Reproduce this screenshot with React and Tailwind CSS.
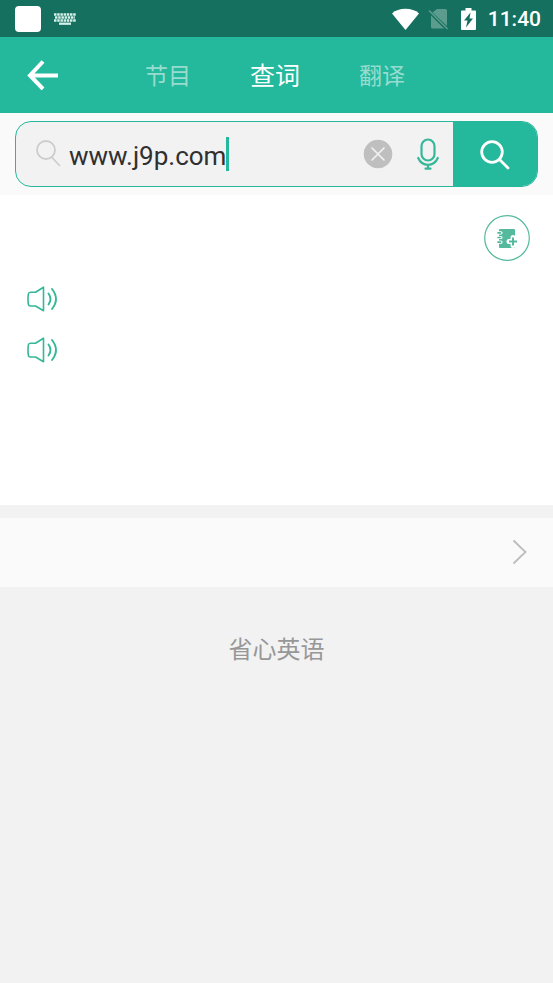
import React, { useState } from 'react';

const tabs = ['节目', '查词', '翻译'];

function StatusBar() {
  return (
    <div className="flex h-[37px] items-center justify-between bg-[#16705f] pr-3 pl-[15px] text-white">
      <div className="flex items-center gap-[13px]">
        <div className="h-[26px] w-[26px] rounded-[4px] bg-white" />
        <svg className="h-3 w-[22px]" viewBox="0 0 22 12" fill="none" stroke="#d5efe9" strokeWidth="2.300">
          <path d="M0 1.500h22M0 7.500h22" strokeDasharray="2.500 0.700" />
          <path d="M1 4.500h20" strokeDasharray="2.500 0.700" />
          <path d="M5 10.700h12" />
        </svg>
      </div>
      <div className="flex items-center">
        <svg className="h-[22px] w-[27px]" viewBox="0 0 27 22" fill="currentColor">
          <path d="M0 5.500C3.500 2.300 8 .8 13.500 .8S23.500 2.300 27 5.500L13.500 22z" />
        </svg>
        <svg className="ml-[9px] h-[22px] w-[21px]" viewBox="0 0 21 22" fill="none">
          <path d="M9 1h8.500q1.500 0 1.500 1.500v15.500L4.500 4.500zM3 7.500v11.500q0 1.500 1.500 1.500H16z" fill="#5c9c8f" />
          <path d="M1 2.500l18.500 18.500" stroke="#5c9c8f" strokeWidth="1.600" />
        </svg>
        <svg className="ml-3 h-[22px] w-[15px]" viewBox="0 0 15 22">
          <path d="M4.500 0h6v2.500H14q1 0 1 1V21q0 1-1 1H1q-1 0-1-1V3.500q0-1 1-1h3.500z" fill="currentColor" />
          <path d="M9.500 4.500L3 12.500h3.500l-1.500 7 7-9H8.500z" fill="#16705f" />
        </svg>
        <span className="ml-3 pt-px font-['Roboto',sans-serif] text-[21px] leading-7 font-medium">11:40</span>
      </div>
    </div>
  );
}

function SpeakerButton({ label }) {
  return (
    <button type="button" aria-label={label} className="block h-[26px] w-[31px]">
      <svg className="h-[26px] w-[31px]" viewBox="0 0 31 26" fill="none" stroke="#35b899" strokeWidth="1.600" strokeLinecap="round" strokeLinejoin="round">
        <path d="M16.500 1.200v23.600l-8-4.800H3.500Q1.500 20 1.300 18Q.7 13 1.300 8Q1.500 6.200 3.500 6.200h5z" />
        <path d="M21.500 7.500q4 5.500 0 11M25 3q8 10 0 20" strokeWidth="1.900" />
      </svg>
    </button>
  );
}

function App() {
  const [activeTab, setActiveTab] = useState('查词');
  const [query, setQuery] = useState('www.j9p.com');

  const handleSubmit = (e) => {
    e.preventDefault();
  };

  return (
    <div className="min-h-screen bg-[#f2f2f2] font-['Noto_Sans_CJK_SC',sans-serif]">
      <StatusBar />

      <header className="grid h-[76px] grid-cols-[1fr_auto_1fr] items-center bg-[#24b99d] pl-[27px] text-white">
        <button type="button" aria-label="返回" className="h-[30px] w-8">
          <svg className="h-[30px] w-8" viewBox="0 0 32 30" fill="none" stroke="currentColor" strokeWidth="4">
            <path d="M16 1.500L3 15.500l13 13.500M3 15.500h28" />
          </svg>
        </button>
        <nav className="flex items-center gap-[59px] pr-[30px] pb-0.5">
          {tabs.map((tab) => (
            <button
              key={tab}
              type="button"
              onClick={() => setActiveTab(tab)}
              className={tab === activeTab ? 'text-[25px] leading-9 text-white' : 'text-[23px] leading-9 text-[#98dccf]'}
            >
              {tab}
            </button>
          ))}
        </nav>
      </header>

      <div className="bg-[#fafafa] px-[15px] py-2">
        <form onSubmit={handleSubmit} className="flex h-[66px] overflow-hidden rounded-2xl border border-[#24b99d] bg-[#f2f2f2]">
          <div className="flex min-w-0 flex-1 items-center pr-[14px] pl-5">
            <svg className="h-[28px] w-[26px] shrink-0" viewBox="0 0 26 28" fill="none" stroke="#cdcdcd" strokeWidth="1.800">
              <circle cx="10" cy="10" r="9" />
              <path d="M15.500 17l8.500 9" />
            </svg>
            <div className="flex min-w-0 flex-1 items-center pl-[7px]">
              <input
                type="text"
                aria-label="查词"
                value={query}
                onChange={(e) => setQuery(e.target.value)}
                className="field-sizing-content min-w-0 pt-[3px] font-['Roboto','Noto_Sans_CJK_SC',sans-serif] text-[26px] leading-9 text-[#303030] outline-none"
              />
              <span className="h-[34px] w-[3px] shrink-0 bg-[#24b99d]" />
            </div>
            <button type="button" aria-label="清除" onClick={() => setQuery('')} className="h-[30px] w-[30px] shrink-0">
              <svg className="h-[30px] w-[30px]" viewBox="0 0 30 30">
                <circle cx="15" cy="15" r="14.300" fill="#bfbfbf" />
                <path d="M9 9l12 12M21 9L9 21" stroke="#f2f2f2" strokeWidth="1.700" strokeLinecap="round" />
              </svg>
            </button>
            <button type="button" aria-label="语音输入" className="ml-6 h-8 w-[22px] shrink-0">
              <svg className="h-8 w-[22px]" viewBox="0 0 22 32" fill="none" stroke="#35b899" strokeWidth="2.200" strokeLinecap="round">
                <rect x="4.500" y="1.500" width="13" height="21" rx="6.500" />
                <path d="M1.200 20q3 6.800 9.800 6.800t9.800-6.800M11 27v3.500M8.500 30.700h5" />
              </svg>
            </button>
          </div>
          <button type="submit" aria-label="搜索" className="flex w-[84px] shrink-0 items-center justify-center bg-[#24b99d] pt-px">
            <svg className="h-[30px] w-[30px]" viewBox="0 0 30 30" fill="none" stroke="white" strokeWidth="2.800">
              <circle cx="12" cy="12" r="10.300" />
              <path d="M19.500 19.500l8.500 8.500" strokeLinecap="round" />
            </svg>
          </button>
        </form>
      </div>

      <main>
        <section className="min-h-[310px] bg-white pt-5 pr-[23px] pl-[27px]">
          <div className="flex justify-end">
            <button type="button" aria-label="加入生词本" className="h-[46px] w-[46px]">
              <svg className="h-[46px] w-[46px]" viewBox="0 0 46 46" fill="none">
                <circle cx="23" cy="23" r="22.300" stroke="#54b99d" strokeWidth="1.200" />
                <path d="M16 14h14q1 0 1 1v17q0 1-1 1H16q-1 0-1-1V15q0-1 1-1z" fill="#54b99d" />
                <path d="M13 17.800h4M13 22.500h4M13 27.200h4" stroke="white" strokeWidth="3.200" strokeLinecap="round" />
                <path d="M14 17.800h2.500M14 22.500h2.500M14 27.200h2.500" stroke="#54b99d" strokeWidth="1.700" strokeLinecap="round" />
                <path d="M29 22.500v8M25 26.500h8" stroke="white" strokeWidth="5" strokeLinecap="round" />
                <path d="M29 22.500v8M25 26.500h8" stroke="#54b99d" strokeWidth="2" />
              </svg>
            </button>
          </div>
          <div className="mt-[25px] flex flex-col gap-[25px]">
            <SpeakerButton label="英式发音" />
            <SpeakerButton label="美式发音" />
          </div>
        </section>

        <button type="button" aria-label="更多" className="mt-[13px] flex h-[69px] w-full items-center justify-end bg-[#fafafa] pr-[26px] pb-px">
          <svg className="h-[26px] w-[15px]" viewBox="0 0 15 26" fill="none" stroke="#bdbdbd" strokeWidth="1.800">
            <path d="M1.500 1.500l12 11.500-12 11.500" />
          </svg>
        </button>
      </main>

      <footer className="py-[43px] text-center text-[24px] leading-9 text-[#979797]">省心英语</footer>
    </div>
  );
}

export default App;
